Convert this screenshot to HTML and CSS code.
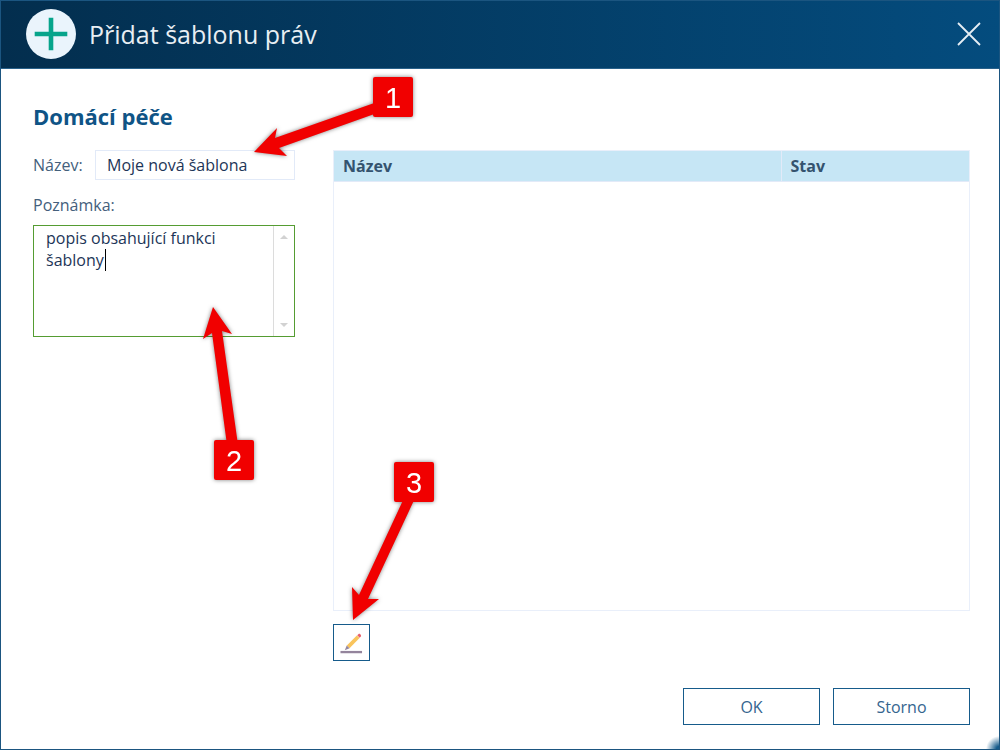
FILE: index.html
```html
<!DOCTYPE html>
<html lang="cs">

<head>
  <meta charset="UTF-8" />
  <meta name="viewport" content="width=device-width, initial-scale=1.0" />
  <title>Přidat šablonu práv</title>
  <link rel="stylesheet" href="styles.css">
</head>

<body>
  <div class="dialog">
    <header class="titlebar">
      <svg class="add-icon" viewBox="0 0 50 50" aria-hidden="true">
        <circle cx="25" cy="25" r="25" fill="#eaf4fc" />
        <path d="M25 11V39M11 25H39" stroke="#06a48b" stroke-width="4.600" stroke-linecap="square" />
      </svg>
      <h1>Přidat šablonu práv</h1>
      <button class="close" type="button" aria-label="Zavřít">
        <svg viewBox="0 0 24 24"><path d="M1 1L23 23M23 1L1 23" stroke="#e6eef4" stroke-width="1.800" /></svg>
      </button>
    </header>

    <form class="content">
      <h2>Domácí péče</h2>

      <div class="columns">
        <!-- Template data -->
        <div class="fields">
          <div class="name-row">
            <label for="name">Název:</label>
            <input type="text" id="name" value="Moje nová šablona" />
          </div>
          <label class="note-label" for="note">Poznámka:</label>
          <div class="note-box">
            <textarea id="note">popis obsahující funkci šablony</textarea>
            <div class="scrollbar">
              <span class="arrow-up"></span>
              <span class="arrow-down"></span>
            </div>
            <span class="caret"></span>
          </div>
        </div>

        <!-- Rights list -->
        <div class="rights">
          <div class="list">
            <table>
              <thead>
                <tr>
                  <th class="col-name">Název</th>
                  <th>Stav</th>
                </tr>
              </thead>
              <tbody></tbody>
            </table>
          </div>
          <button class="edit" type="button" aria-label="Upravit">
            <svg viewBox="0 0 24 24">
              <path d="M0.500 22H23" stroke="#94849c" stroke-width="2.400" />
              <path d="M8.500 16.500L19 6" stroke="#f9c45c" stroke-width="4" />
              <path d="M7 15L10 18L5 20Z" fill="#9688a0" />
              <path d="M18 4.500L20 2.500Q22.500 3.500 22 5.500L20.500 7Z" fill="#e8606a" />
            </svg>
          </button>
        </div>
      </div>

      <div class="actions">
        <button type="submit">OK</button>
        <button type="button">Storno</button>
      </div>
    </form>
    <span class="grip"></span>
  </div>

  <!-- Numbered steps -->
  <svg class="steps" width="450" height="640" viewBox="0 0 450 640">
    <g class="step">
      <path d="M254 152L277 128L275 138L380 101V112L279 148L287 156Z" />
      <rect x="373" y="77" width="40" height="40" rx="2" />
      <text x="393" y="108">1</text>
    </g>
    <g class="step">
      <path d="M213 307L232 334L222 331L238 445H227L212 333L203 339Z" />
      <rect x="214" y="440" width="40" height="40" rx="2" />
      <text x="234" y="471">2</text>
    </g>
    <g class="step">
      <path d="M353 620L352 587L359 595L405 496H416L368 599L379 599Z" />
      <rect x="394" y="462" width="40" height="40" rx="2" />
      <text x="414" y="493">3</text>
    </g>
  </svg>
</body>

</html>
```
FILE: styles.css
```css
* {
  box-sizing: border-box;
}

body {
  margin: 0;
  font-family: "Open Sans", sans-serif;
  font-size: 16px;
  line-height: 22px;
  color: #44607c;
  background-color: white;
}

.dialog {
  position: relative;
  display: flex;
  flex-direction: column;
  min-height: 100vh;
  border: 1px solid #1b5580;
}

.titlebar {
  display: flex;
  align-items: center;
  gap: 13px;
  height: 68px;
  padding: 0 18px 2px 25px;
  background: linear-gradient(90deg, #032e4e, #044c7e);
  border-bottom: 1px solid #29618a;
}

.titlebar h1 {
  flex: 1;
  margin: 0;
  font-size: 25px;
  font-weight: normal;
  line-height: 34px;
  color: #e8eef3;
}

.add-icon {
  width: 50px;
  height: 50px;
}

.close {
  width: 24px;
  height: 24px;
  padding: 0;
  background: none;
  border: none;
  cursor: pointer;
}

.close svg {
  display: block;
}

.content {
  flex: 1;
  display: flex;
  flex-direction: column;
  padding: 31px 29px 24px 32px;
}

.content h2 {
  margin: 0 0 18px;
  font-size: 22px;
  line-height: 32px;
  color: #0f5486;
}

.columns {
  flex: 1;
  display: flex;
  gap: 38px;
}

.fields {
  width: 262px;
}

.name-row {
  display: flex;
  align-items: center;
  justify-content: space-between;
}

.name-row input {
  width: 200px;
  height: 30px;
  padding: 0 11px;
  border: 1px solid #e2eaf8;
  font: inherit;
  color: #1d3557;
}

.note-label {
  display: block;
  margin: 14px 0 9px;
}

.note-box {
  position: relative;
  display: flex;
  height: 112px;
  border: 1px solid #559c32;
}

.note-box textarea {
  flex: 1;
  min-width: 0;
  padding: 1px 12px;
  border: none;
  outline: none;
  resize: none;
  overflow: hidden;
  font: inherit;
  color: #1d3557;
}

.scrollbar {
  display: flex;
  flex-direction: column;
  align-items: center;
  justify-content: space-between;
  width: 21px;
  padding: 9px 0;
  border-left: 1px solid #dcdcdc;
}

.arrow-up,
.arrow-down {
  border: 4px solid transparent;
}

.arrow-up {
  border-top: none;
  border-bottom-color: #d2d2d2;
}

.arrow-down {
  border-bottom: none;
  border-top-color: #d2d2d2;
}

.caret {
  position: absolute;
  left: 71px;
  top: 23px;
  width: 1px;
  height: 22px;
  background-color: black;
}

.rights {
  flex: 1;
  display: flex;
  flex-direction: column;
  gap: 13px;
}

.list {
  flex: 1;
  border: 1px solid #e9effa;
}

table {
  width: 100%;
  border-collapse: collapse;
  table-layout: fixed;
}

th {
  height: 30px;
  padding: 0 9px;
  text-align: left;
  color: #34536f;
  background-color: #c6e6f5;
  border-bottom: 1px solid #e2eaf8;
}

.col-name {
  width: 447px;
  border-right: 1px solid #e2eaf8;
}

.edit,
.actions button {
  background-color: white;
  border: 1px solid #165b8b;
  cursor: pointer;
}

.edit {
  width: 37px;
  height: 37px;
  padding: 6px;
}

.edit svg {
  display: block;
}

.actions {
  display: flex;
  justify-content: flex-end;
  gap: 13px;
  margin-top: 27px;
}

.actions button {
  width: 137px;
  height: 37px;
  font: inherit;
  color: #34658f;
}

.grip {
  position: absolute;
  right: 0;
  bottom: 0;
  width: 13px;
  height: 13px;
  background: radial-gradient(circle 13px at bottom right, #165b8b 20%, transparent 100%);
}

.steps {
  position: absolute;
  left: 0;
  top: 0;
  pointer-events: none;
}

.step {
  fill: #f10000;
  filter: drop-shadow(0 0 2px rgba(0, 0, 0, 0.5));
}

.step text {
  fill: white;
  font-family: "Liberation Sans", Arial, sans-serif;
  font-size: 29px;
  text-anchor: middle;
}
```
